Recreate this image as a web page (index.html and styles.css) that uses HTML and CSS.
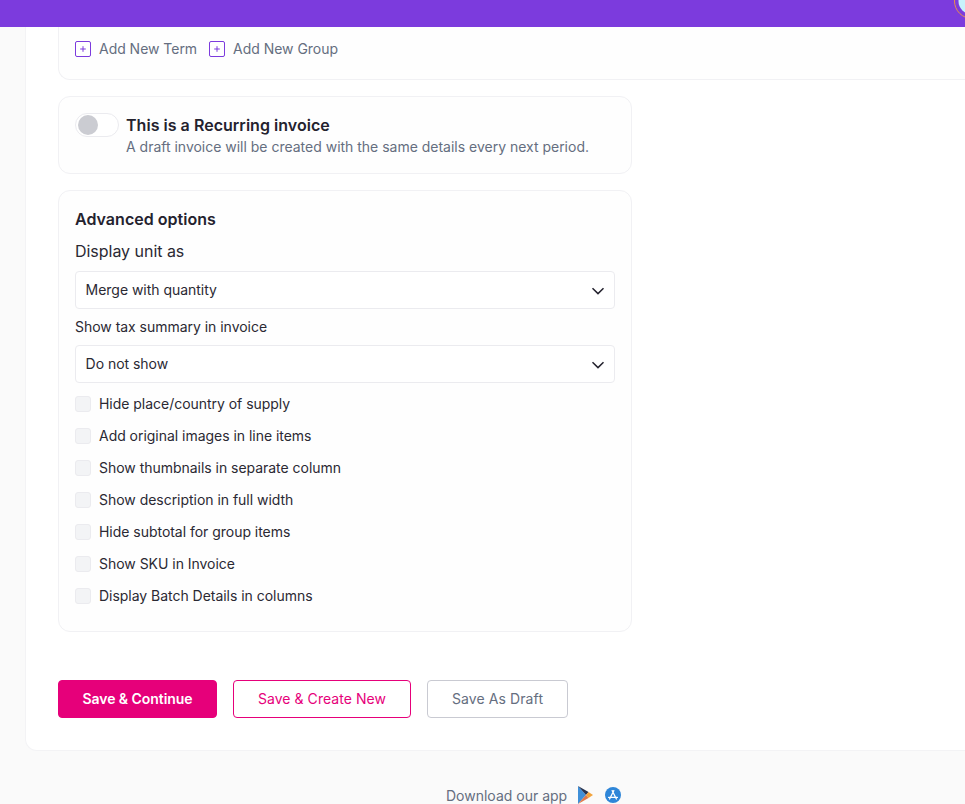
FILE: index.html
```html
<!DOCTYPE html>
<html lang="en">
<head>
<meta charset="utf-8">
<title>Invoice</title>
<link rel="stylesheet" href="styles.css">
</head>
<body>
<header class="topbar">
  <svg class="avatar" width="11" height="18" viewBox="954 0 11 18"><circle cx="972" cy="1" r="17.5" fill="none" stroke="#e8914a"/><circle cx="972" cy="1" r="13.5" fill="#c8f3fc"/></svg>
</header>
<main class="sheet">
  <section class="card card-wide">
    <div class="add-row">
      <button class="add-link"><span class="plus"><svg width="16" height="16" viewBox="0 0 16 16"><rect x="0.5" y="0.5" width="15" height="15" rx="1.5" fill="#fff" stroke="#7c3bdd"/><path d="M8 5.2v5.6M5.2 8h5.6" stroke="#7c3bdd" stroke-width="1"/></svg></span>Add New Term</button>
      <button class="add-link"><span class="plus"><svg width="16" height="16" viewBox="0 0 16 16"><rect x="0.5" y="0.5" width="15" height="15" rx="1.5" fill="#fff" stroke="#7c3bdd"/><path d="M8 5.2v5.6M5.2 8h5.6" stroke="#7c3bdd" stroke-width="1"/></svg></span>Add New Group</button>
    </div>
  </section>

  <section class="card card-narrow recurring">
    <span class="toggle"><span class="knob"></span></span>
    <div>
      <div class="rec-title">This is a Recurring invoice</div>
      <div class="rec-sub">A draft invoice will be created with the same details every next period.</div>
    </div>
  </section>

  <section class="card card-narrow advanced">
    <h2 class="adv-title">Advanced options</h2>
    <div class="label-lg">Display unit as</div>
    <div class="select">Merge with quantity<svg class="chev" width="14" height="8" viewBox="0 0 14 8"><path d="M1.5 1.2 7 6.6l5.5-5.4" fill="none" stroke="#24222e" stroke-width="1.5"/></svg></div>
    <div class="label-sm">Show tax summary in invoice</div>
    <div class="select">Do not show<svg class="chev" width="14" height="8" viewBox="0 0 14 8"><path d="M1.5 1.2 7 6.6l5.5-5.4" fill="none" stroke="#24222e" stroke-width="1.5"/></svg></div>
    <ul class="checks">
      <li><span class="box"></span>Hide place/country of supply</li>
      <li><span class="box"></span>Add original images in line items</li>
      <li><span class="box"></span>Show thumbnails in separate column</li>
      <li><span class="box"></span>Show description in full width</li>
      <li><span class="box"></span>Hide subtotal for group items</li>
      <li><span class="box"></span>Show SKU in Invoice</li>
      <li><span class="box"></span>Display Batch Details in columns</li>
    </ul>
  </section>

  <div class="actions">
    <button class="btn btn-primary">Save &amp; Continue</button>
    <button class="btn btn-outline">Save &amp; Create New</button>
    <button class="btn btn-grey">Save As Draft</button>
  </div>
</main>
<footer class="foot">
  <span>Download our app</span>
  <svg class="play" width="15" height="18" viewBox="0 0 15 18"><path d="M0 0 8 9 0 18Z" fill="#3f8fd8"/><path d="M0 0 10.5 6 8 9Z" fill="#26324f"/><path d="M10.5 6 15 9 10.5 12 8 9Z" fill="#f2a33c"/><path d="M0 18 10.5 12 8 9Z" fill="#e0794a"/></svg>
  <svg class="appstore" width="16" height="16" viewBox="0 0 16 16"><circle cx="8" cy="8" r="8" fill="#2f86d8"/><path d="M4.6 12 8 5.2M11.4 12 8 5.2M3.6 10.4h8.8M8 5.2 7.2 3.6M8 5.2l.8-1.6" fill="none" stroke="#fff" stroke-width="1.3" stroke-linecap="round"/></svg>
</footer>
</body>
</html>
```
FILE: styles.css
```css
* { box-sizing: border-box; }
html, body { margin: 0; height: 804px; overflow: hidden; }
body { background: #fafafa; font-family: Inter, "Liberation Sans", sans-serif; color: #2b2933; width: 965px; letter-spacing: -0.03px; }
.topbar { height: 27px; background: #7c3bdd; position: relative; overflow: hidden; }
.avatar { position: absolute; left: 954px; top: 0; display: block; }
.sheet { margin-left: 25px; width: 940px; height: 724px; background: #fff; border: 1px solid #f3f3f5; border-top: 0; border-right: 0; border-radius: 0 0 0 12px; padding-left: 32px; }
.card { border: 1px solid #f1f1f4; border-radius: 12px; background: #fefefe; }
.card-wide { width: 907px; height: 53px; border-top: 0; border-right: 0; border-radius: 0 0 0 12px; padding: 14px 16px 0; }
.card-narrow { width: 574px; }
.add-row { display: flex; gap: 12px; }
.add-link { display: flex; align-items: center; gap: 8px; border: 0; background: none; padding: 0; font: 14px/16px Inter, sans-serif; letter-spacing: -0.03px; color: #656e80; }
.plus { display: block; width: 16px; height: 16px; }
.plus svg { display: block; }
.recurring { height: 78px; margin-top: 16px; padding: 16px 16px 0; display: flex; gap: 7px; }
.toggle { display: block; width: 44px; height: 24px; border: 1px solid #ebebef; border-radius: 12px; padding: 1px 2px; background: #fff; flex: none; }
.knob { display: block; width: 20px; height: 20px; border-radius: 50%; background: #cbccd2; }
.rec-title { font-size: 16px; line-height: 24px; font-weight: 600; color: #24222e; letter-spacing: 0.03px; }
.rec-sub { font-size: 14px; line-height: 20px; color: #656e80; letter-spacing: -0.01px; }
.advanced { height: 442px; margin-top: 16px; padding: 16px; }
.adv-title { margin: 0; font-size: 16px; line-height: 24px; font-weight: 600; letter-spacing: 0.03px; color: #24222e; }
.label-lg { font-size: 16px; line-height: 24px; margin-top: 8px; }
.label-sm { font-size: 14px; line-height: 20px; margin: 8px 0; }
.select { height: 38px; border: 1px solid #ebebef; border-radius: 4px; display: flex; align-items: center; justify-content: space-between; padding: 0 9px 1px 9.6px; font-size: 14px; background: #fff; }
.label-lg + .select { margin-top: 8px; }
.chev { display: block; position: relative; top: 1px; }
.checks { list-style: none; margin: 5px 0 0; padding: 0; }
.checks li { display: flex; align-items: center; gap: 8px; height: 32px; padding-bottom: 2px; font-size: 14px; }
.box { display: block; width: 16px; height: 16px; margin-top: 2px; border: 1px solid #ebebef; border-radius: 3px; background: #f3f4f6; }
.actions { display: flex; gap: 16px; margin-top: 48px; }
.btn { height: 38px; border-radius: 4px; font: 14px/20px Inter, sans-serif; padding: 0; }
.btn-primary { width: 159px; background: #e6007a; border: 1px solid #e6007a; color: #fff; font-weight: 600; letter-spacing: -0.05px; }
.btn-outline { width: 178px; background: #fff; border: 1px solid #e6007a; color: #e6007a; letter-spacing: 0.05px; }
.btn-grey { width: 141px; background: #fff; border: 1px solid #c9cad2; color: #656e80; letter-spacing: 0.1px; }
.foot { display: flex; align-items: center; margin: 35px 0 0 446px; height: 18px; font-size: 14px; color: #656e80; }
.foot span { letter-spacing: 0; }
.play { margin-left: 11px; }
.appstore { margin-left: 12px; }
```
